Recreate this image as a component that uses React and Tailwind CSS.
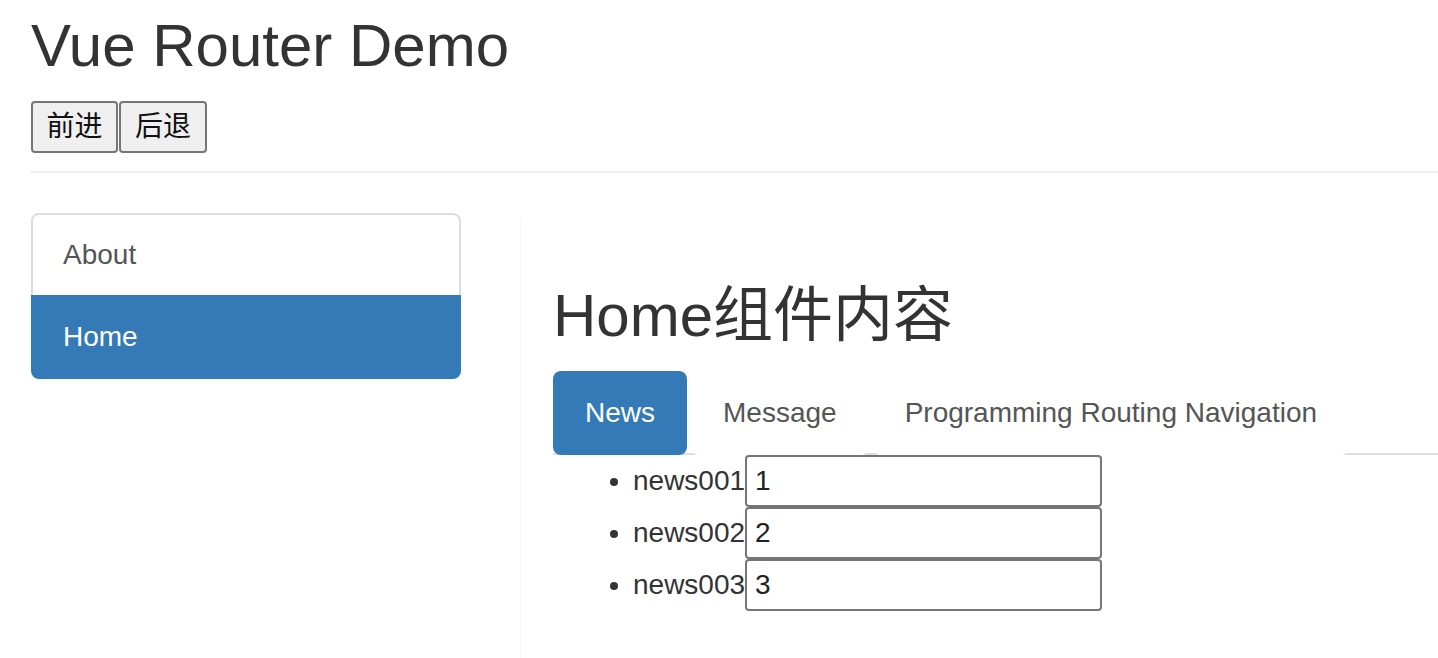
import React from 'react';

const font = "font-['Liberation_Sans','Noto_Sans_CJK_SC',sans-serif]";

const NavTab = ({ label, active }) => (
    <li className="-mb-[2px] mr-[4px]">
        <a
            className={`block px-[30px] py-[20px] leading-[40px] text-[28px] border-2 border-transparent rounded-lg ${
                active ? 'bg-[#337ab7] text-white' : 'bg-white text-[#555]'
            }`}
        >
            {label}
        </a>
    </li>
);

const App = () => {
    const news = [
        { title: 'news001', value: '1' },
        { title: 'news002', value: '2' },
        { title: 'news003', value: '3' },
    ];

    return (
        <div className={`${font} h-screen overflow-hidden bg-white text-[#333] pl-[31px]`}>
            {/* Header */}
            <h1 className="mt-[13px] text-[60px] leading-[66px] font-normal text-[#333]">Vue Router Demo</h1>
            <div className="mt-[22px] flex gap-[1px]">
                <button className="h-[52px] w-[87px] text-[28px] leading-[40px] text-[#111] bg-[#efefef] border-2 border-[#767676] rounded-[4px]">
                    前进
                </button>
                <button className="h-[52px] w-[88px] text-[28px] leading-[40px] text-[#111] bg-[#efefef] border-2 border-[#767676] rounded-[4px]">
                    后退
                </button>
            </div>
            <div className="mt-[18px] h-[2px] bg-[#eee]" />

            <div className="mt-[40px] flex items-start">
                {/* Sidebar */}
                <div className="w-[430px] flex-shrink-0 text-[28px] leading-[40px]">
                    <a className="block px-[30px] py-[20px] border-2 border-[#ddd] rounded-t-lg bg-white text-[#555]">
                        About
                    </a>
                    <a className="block -mt-[2px] px-[30px] py-[20px] border-2 border-[#337ab7] rounded-b-lg bg-[#337ab7] text-white">
                        Home
                    </a>
                </div>

                {/* Content */}
                <div className="ml-[59px] mt-[5px] flex-1 min-w-0 h-[440px] border-l border-[#f7f7f7] pl-[32px] pt-[65px]">
                    <h2 className="text-[60px] leading-[66px] font-normal text-[#333] whitespace-nowrap">Home组件内容</h2>
                    <ul className="mt-[22px] flex border-b-2 border-[#ddd] whitespace-nowrap">
                        <NavTab label="News" active />
                        <NavTab label="Message" />
                        <NavTab label="Programming Routing Navigation" />
                    </ul>
                    <ul className="pl-[80px] list-disc text-[28px] text-[#333]">
                        {news.map((n) => (
                            <li key={n.title} className="leading-[40px]">
                                <span>{n.title}</span>
                                <input
                                    readOnly
                                    value={n.value}
                                    className="h-[52px] w-[357px] px-[8px] align-baseline text-[28px] text-[#222] border-2 border-[#767676] rounded-[4px] outline-none"
                                />
                            </li>
                        ))}
                    </ul>
                </div>
            </div>
        </div>
    );
};

export default App;
